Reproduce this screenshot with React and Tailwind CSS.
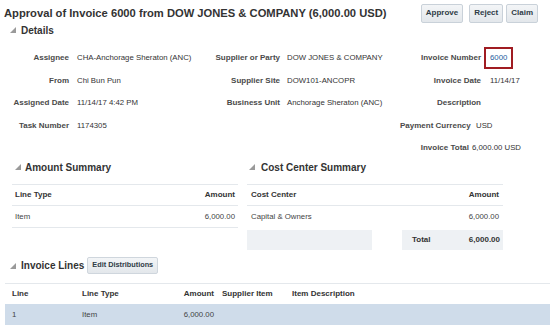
import React from 'react';

const Tri = ({ className = '' }) => (
  <svg className={className} width="6" height="6" viewBox="0 0 6 6">
    <polygon points="6,0 6,6 0,6" fill="#9a9a9a" />
  </svg>
);

const Btn = ({ children, className = '' }) => (
  <button
    className={`h-[19px] px-[4px] rounded-[2px] border border-[#c9d1d9] bg-gradient-to-b from-[#f3f5f7] to-[#e3e7eb] text-[8px] font-bold text-[#2f3b46] ${className}`}
  >
    {children}
  </button>
);

const Heading = ({ children, triClass = 'ml-[10px]', gap = 'ml-[5px]' }) => (
  <div className="flex items-center">
    <Tri className={triClass} />
    <span className={`${gap} text-[10px] font-bold text-[#333]`}>{children}</span>
  </div>
);

function Field({ label, value, labelW, gap, valueClass = 'text-[#333]' }) {
  return (
    <div className="flex items-center h-[22.5px]">
      <div className={`${labelW} text-right text-[8px] font-bold text-[#4a4a4a] whitespace-nowrap`}>{label}</div>
      <div className={`${gap} text-[7.8px] whitespace-nowrap ${valueClass}`}>{value}</div>
    </div>
  );
}

export default function App() {
  return (
    <div className="w-[550px] h-[329px] bg-white overflow-hidden" style={{ fontFamily: '"Liberation Sans", Arial, sans-serif' }}>
      {/* title bar */}
      <div className="flex items-center justify-between h-[26px] pl-[4px] pr-[12px]">
        <h1 className="text-[11.2px] font-bold text-[#333] whitespace-nowrap">
          Approval of Invoice 6000 from DOW JONES &amp; COMPANY (6,000.00 USD)
        </h1>
        <div className="flex items-center gap-[3px]">
          <Btn className="mr-[3px]">Approve</Btn>
          <Btn>Reject</Btn>
          <Btn>Claim</Btn>
        </div>
      </div>

      {/* details */}
      <div className="h-[8px] flex items-center">
        <Heading gap="ml-[5px]">Details</Heading>
      </div>
      <div className="flex pt-[13px] h-[125.5px]">
        <div className="w-[200px]">
          <Field label="Assignee" value="CHA-Anchorage Sheraton (ANC)" labelW="w-[69px]" gap="ml-[8px]" />
          <Field label="From" value="Chi Bun Pun" labelW="w-[69px]" gap="ml-[8px]" />
          <Field label="Assigned Date" value="11/14/17 4:42 PM" labelW="w-[69px]" gap="ml-[8px]" />
          <Field label="Task Number" value="1174305" labelW="w-[69px]" gap="ml-[8px]" />
        </div>
        <div className="w-[200px]">
          <Field label="Supplier or Party" value="DOW JONES & COMPANY" labelW="w-[80px]" gap="ml-[7px]" />
          <Field label="Supplier Site" value="DOW101-ANCOPR" labelW="w-[80px]" gap="ml-[7px]" />
          <Field label="Business Unit" value="Anchorage Sheraton (ANC)" labelW="w-[80px]" gap="ml-[7px]" />
        </div>
        <div className="flex-1">
          <div className="flex items-center h-[22.5px]">
            <div className="w-[81px] text-right text-[8px] font-bold text-[#4a4a4a] whitespace-nowrap">Invoice Number</div>
            <div className="ml-[3px] h-[22px] w-[29px] border-2 border-[#a01c22] flex items-center pl-[4px] text-[7.8px] text-[#1a5c9e]">6000</div>
          </div>
          <Field label="Invoice Date" value="11/14/17" labelW="w-[81px]" gap="ml-[9px]" />
          <Field label="Description" value="" labelW="w-[81px]" gap="ml-[9px]" />
          <Field label="Payment Currency" value="USD" labelW="w-[70px]" gap="ml-[6px]" />
          <Field label="Invoice Total" value="6,000.00 USD" labelW="w-[69px]" gap="ml-[3px]" />
        </div>
      </div>

      {/* summaries */}
      <div className="flex h-[90.5px]">
        <div className="ml-[12px] w-[226px]">
          <div className="h-[15px] flex items-center">
            <Heading triClass="ml-[3px]" gap="ml-[4px]">Amount Summary</Heading>
          </div>
          <div className="mt-[9.5px] border-t border-[#e4e8ec]">
            <div className="flex items-center justify-between h-[21px] px-[3px] border-b border-[#e4e8ec] text-[8px] font-bold text-[#333]">
              <span>Line Type</span>
              <span>Amount</span>
            </div>
            <div className="flex items-center justify-between h-[22px] px-[3px] border-b border-[#e4e8ec] text-[7.8px] text-[#444]">
              <span>Item</span>
              <span>6,000.00</span>
            </div>
          </div>
        </div>
        <div className="ml-[9px] w-[256px]">
          <div className="h-[15px] flex items-center">
            <Heading triClass="ml-[2px]" gap="ml-[6px]">Cost Center Summary</Heading>
          </div>
          <div className="mt-[9.5px] border-t border-[#e4e8ec]">
            <div className="flex items-center justify-between h-[21px] px-[4px] border-b border-[#e4e8ec] text-[8px] font-bold text-[#333]">
              <span>Cost Center</span>
              <span>Amount</span>
            </div>
            <div className="flex items-center justify-between h-[22px] px-[4px] text-[7.8px] text-[#444]">
              <span>Capital &amp; Owners</span>
              <span>6,000.00</span>
            </div>
            <div className="mt-[2px] flex h-[20px] text-[8px] font-bold text-[#333]">
              <div className="w-[125px] bg-[#eef1f4]" />
              <div className="w-[30px]" />
              <div className="flex-1 bg-[#eef1f4] flex items-center justify-between pl-[10px] pr-[3px]">
                <span>Total</span>
                <span>6,000.00</span>
              </div>
            </div>
          </div>
        </div>
      </div>

      {/* invoice lines */}
      <div className="mt-[7px] h-[17px] flex items-center">
        <Heading gap="ml-[5px]">Invoice Lines</Heading>
        <button className="ml-[3px] h-[17px] px-[4px] rounded-[2px] border border-[#cfd6dd] bg-gradient-to-b from-[#f3f5f7] to-[#e3e7eb] text-[7.3px] font-bold text-[#2f3b46]">
          Edit Distributions
        </button>
      </div>
      <div className="mt-[9px] ml-[5px] border-t border-[#e4e8ec]">
        <div className="flex items-center h-[20px] text-[8px] font-bold text-[#333]">
          <span className="ml-[7px] w-[70px]">Line</span>
          <span className="w-[80px]">Line Type</span>
          <span className="w-[52px] text-right">Amount</span>
          <span className="ml-[8px] w-[70px]">Supplier Item</span>
          <span>Item Description</span>
        </div>
        <div className="flex items-center h-[21px] bg-[#cfdcea] text-[7.8px] text-[#444]">
          <span className="ml-[7px] w-[70px]">1</span>
          <span className="w-[80px]">Item</span>
          <span className="w-[52px] text-right">6,000.00</span>
        </div>
      </div>
    </div>
  );
}
